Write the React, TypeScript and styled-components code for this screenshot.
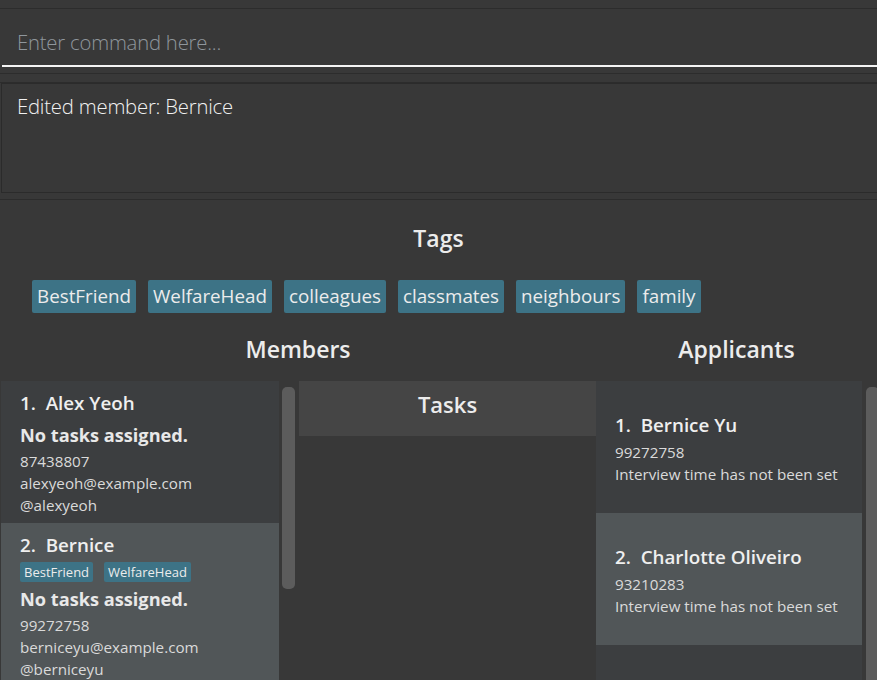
import React from 'react';
import styled, { createGlobalStyle } from 'styled-components';

const GlobalStyle = createGlobalStyle`
  html, body {
    margin: 0;
    padding: 0;
    background: #383838;
    font-family: "Open Sans", "Noto Sans", sans-serif;
    overflow: hidden;
  }
  * { box-sizing: border-box; }
`

const Page = styled.div`
  width: 877px;
  height: 680px;
  background: #383838;
  display: flex;
  flex-direction: column;
  overflow: hidden;
`

const Strip = styled.div<{ h: number }>`
  height: ${p => p.h}px;
  flex: none;
  border-bottom: 1px solid #2c2c2c;
`

const CommandBox = styled.div`
  height: 65px;
  flex: none;
  padding: 0 0 6px 2px;
  border-bottom: 1px solid #2c2c2c;
  display: flex;
  align-items: flex-end;
`

const CommandInput = styled.div`
  flex: 1;
  height: 47px;
  border-bottom: 2px solid #f4f4f4;
  color: #8f969c;
  font-size: 20.3px;
  font-weight: 300;
  padding: 8px 0 0 15px;
  letter-spacing: -0.2px;
`

const ResultBox = styled.div`
  height: 110px;
  flex: none;
  margin-left: 1px;
  border: 1px solid #2b2b2b;
  border-right: none;
  color: #f2f2f2;
  font-size: 20.3px;
  font-weight: 300;
  padding: 8px 0 0 15px;
  letter-spacing: -0.2px;
`

const Main = styled.div`
  flex: 1;
  display: flex;
  flex-direction: column;
  min-height: 0;
`

const Heading = styled.div`
  color: #ececec;
  font-size: 23px;
  font-weight: 600;
  text-align: center;
  line-height: 30px;
`

const TagsTitle = styled(Heading)`
  padding-top: 23px;
`

const TagRow = styled.div`
  display: flex;
  gap: 12px;
  padding: 27px 0 0 32px;
`

const Tag = styled.span<{ small?: boolean }>`
  background: #3d7386;
  color: #ececec;
  border-radius: 2px;
  font-size: ${p => (p.small ? 13 : 18.8)}px;
  line-height: ${p => (p.small ? 20 : 33)}px;
  padding: 0 ${p => (p.small ? 4 : 5)}px;
  white-space: nowrap;
`

const Columns = styled.div`
  display: grid;
  grid-template-columns: 298px 298px 1fr;
  grid-template-rows: 54px 1fr;
  flex: 1;
  min-height: 0;
  margin-top: 14px;
`

const ColHead = styled(Heading)<{ span?: number }>`
  grid-column: span ${p => p.span ?? 1};
  padding-top: 7px;
`

const ListPane = styled.div<{ listWidth: number }>`
  display: grid;
  grid-template-columns: ${p => p.listWidth}px 1fr;
  min-height: 0;
  overflow: hidden;
`

const List = styled.div`
  background: #3c3e40;
  display: flex;
  flex-direction: column;
`

const MemberList = styled(List)`
  margin-left: 1px;
`

const ScrollTrack = styled.div<{ thumbH: number; left: number }>`
  padding: 6px 0 0 ${p => p.left}px;
  &::before {
    content: '';
    display: block;
    width: 13px;
    height: ${p => p.thumbH}px;
    background: #5c5c5c;
    border-radius: 5px;
  }
`

const Card = styled.div<{ alt?: boolean; pt: number; pb: number }>`
  background: ${p => (p.alt ? '#515658' : '#3c3e40')};
  flex: none;
  padding: ${p => p.pt}px 0 ${p => p.pb}px 19px;
  display: flex;
  flex-direction: column;
  align-items: flex-start;
  color: #dcdcdc;
`

const Name = styled.div`
  color: #efefef;
  font-size: 18.8px;
  font-weight: 600;
  line-height: 26px;
  white-space: pre;
`

const NoTasks = styled.div`
  color: #e8e8e8;
  font-size: 18.2px;
  font-weight: 700;
  line-height: 30px;
  margin-top: 4px;
`

const Detail = styled.div<{ gapTop?: number }>`
  font-size: 15.2px;
  line-height: 22px;
  color: #dadada;
  margin-top: ${p => p.gapTop ?? 0}px;
`

const CardTags = styled.div`
  display: flex;
  gap: 11px;
  margin: 4px 0 -2px;
`

const TasksPane = styled.div`
  padding-left: 1px;
`

const TasksHead = styled.div`
  background: #454545;
  height: 55px;
  color: #ececec;
  font-size: 22px;
  font-weight: 600;
  text-align: center;
  line-height: 46px;
`

const members = [
  { no: 1, name: 'Alex Yeoh', tags: [] as string[], phone: '87438807', email: 'alexyeoh@example.com', handle: '@alexyeoh' },
  { no: 2, name: 'Bernice', tags: ['BestFriend', 'WelfareHead'], phone: '99272758', email: 'berniceyu@example.com', handle: '@berniceyu' },
];

const applicants = [
  { no: 1, name: 'Bernice Yu', phone: '99272758' },
  { no: 2, name: 'Charlotte Oliveiro', phone: '93210283' },
];

const allTags = ['BestFriend', 'WelfareHead', 'colleagues', 'classmates', 'neighbours', 'family'];

export default function App() {
  return (
    <Page>
      <GlobalStyle />
      <Strip h={9} />
      <CommandBox>
        <CommandInput>Enter command here...</CommandInput>
      </CommandBox>
      <Strip h={9} />
      <ResultBox>Edited member: Bernice</ResultBox>
      <Strip h={7} />
      <Main>
        <TagsTitle>Tags</TagsTitle>
        <TagRow>
          {allTags.map(t => <Tag key={t}>{t}</Tag>)}
        </TagRow>
        <Columns>
          <ColHead span={2}>Members</ColHead>
          <ColHead>Applicants</ColHead>
          <ListPane listWidth={279}>
            <MemberList>
              {members.map((m, i) => (
                <Card key={m.no} alt={i % 2 === 1} pt={9} pb={7}>
                  <Name>{`${m.no}.  ${m.name}`}</Name>
                  {m.tags.length > 0 && (
                    <CardTags>
                      {m.tags.map(t => <Tag small key={t}>{t}</Tag>)}
                    </CardTags>
                  )}
                  <NoTasks>No tasks assigned.</NoTasks>
                  <Detail>{m.phone}</Detail>
                  <Detail>{m.email}</Detail>
                  <Detail>{m.handle}</Detail>
                </Card>
              ))}
            </MemberList>
            <ScrollTrack thumbH={202} left={3} />
          </ListPane>
          <TasksPane>
            <TasksHead>Tasks</TasksHead>
          </TasksPane>
          <ListPane listWidth={266}>
            <List>
              {applicants.map((a, i) => (
                <Card key={a.no} alt={i % 2 === 1} pt={31} pb={28}>
                  <Name>{`${a.no}.  ${a.name}`}</Name>
                  <Detail gapTop={3}>{a.phone}</Detail>
                  <Detail>Interview time has not been set</Detail>
                </Card>
              ))}
            </List>
            <ScrollTrack thumbH={300} left={4} />
          </ListPane>
        </Columns>
      </Main>
    </Page>
  );
}
